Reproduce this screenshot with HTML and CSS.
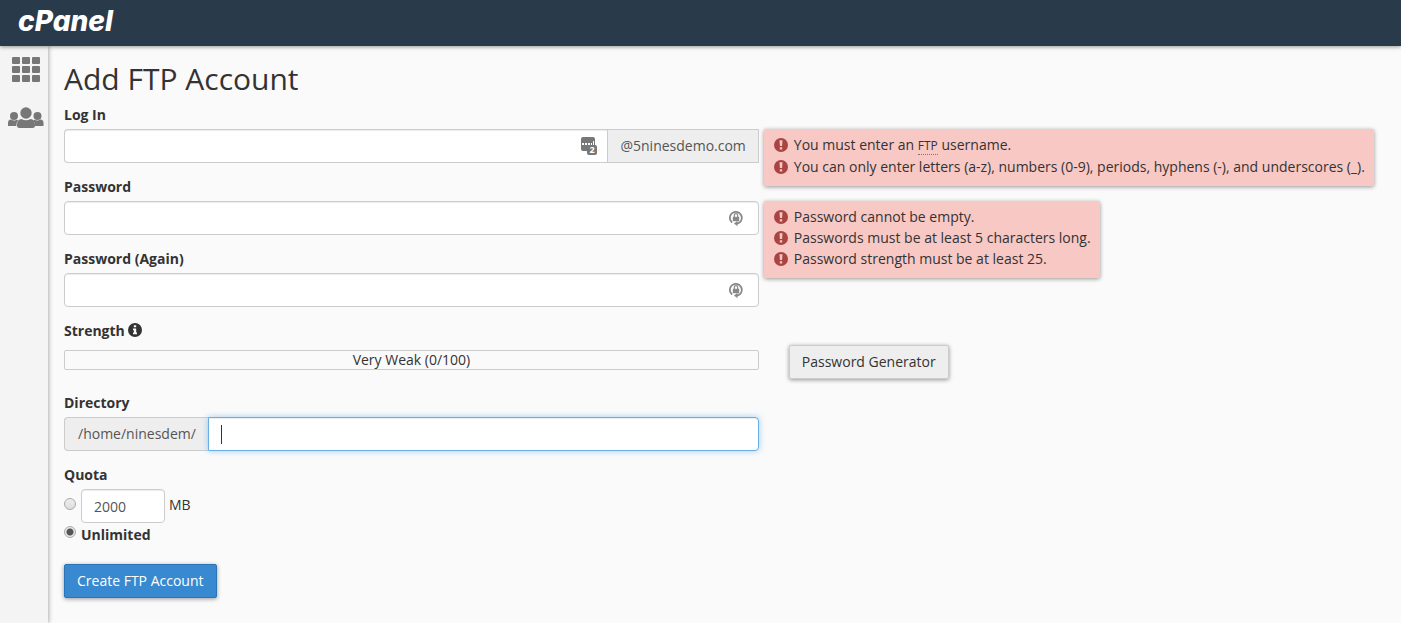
FILE: index.html
```html
<!doctype html>
<html lang="en">
    <head>
        <meta charset="utf-8">
        <meta name="viewport" content="width=device-width, initial-scale=1">
        <title>cPanel - Add FTP Account</title>
        <link rel="stylesheet" href="styles.css">
    </head>

    <body>
        <svg class="sprite" aria-hidden="true">
            <symbol id="icon-error" viewBox="0 0 14 14">
                <circle cx="7" cy="7" r="7" fill="#a94442"/>
                <path d="M5.5 2.2h3l-.4 5.9H5.900zM5.800 9.200h2.400v2.200H5.800z" fill="#f8c8c4"/>
            </symbol>
            <symbol id="icon-lock" viewBox="0 0 16 18">
                <path d="M4.200 13.600A6 6 0 1 1 12.800 12.200Q11.500 14 9 14.600" fill="none" stroke="#888" stroke-width="1.800"/>
                <path d="M9.500 11.800v5.400L6 14.600z" fill="#888"/>
                <path d="M4.800 7.800h6.400v4.400H4.800z" fill="#888"/>
                <path d="M6.300 8V6.400a1.700 1.700 0 0 1 3.400 0V8" fill="none" stroke="#888" stroke-width="1.200"/>
            </symbol>
        </svg>

        <header class="navbar">
            <a class="brand" href="#">cPanel</a>
        </header>

        <div class="layout">
            <nav class="sidebar">
                <a href="#" aria-label="Home">
                    <svg width="30" height="26" viewBox="0 0 30 26" fill="#777">
                        <rect x="1" y="0" width="8" height="7" rx="1"/>
                        <rect x="11" y="0" width="8" height="7" rx="1"/>
                        <rect x="21" y="0" width="8" height="7" rx="1"/>
                        <rect x="1" y="9" width="8" height="7" rx="1"/>
                        <rect x="11" y="9" width="8" height="7" rx="1"/>
                        <rect x="21" y="9" width="8" height="7" rx="1"/>
                        <rect x="1" y="18" width="8" height="7" rx="1"/>
                        <rect x="11" y="18" width="8" height="7" rx="1"/>
                        <rect x="21" y="18" width="8" height="7" rx="1"/>
                    </svg>
                </a>
                <a href="#" aria-label="User Manager">
                    <svg width="36" height="22" viewBox="0 0 36 22" fill="#777">
                        <circle cx="6" cy="9" r="4"/>
                        <circle cx="29.500" cy="9" r="4"/>
                        <path d="M0 19v-3q0-3.500 3-3.500 3 1.800 6 .3 1 0 1.200.4Q8.500 15 8.400 19zM35.500 19v-3q0-3.500-3-3.500-3 1.800-6 .3-1 0-1.200.4 1.700 1.800 1.800 5.800z"/>
                        <circle cx="18" cy="6" r="5.700"/>
                        <path d="M9 18.500q0-6.300 4.500-6.500 4.500 2.600 9 0 4.500.2 4.500 6.500 0 2.500-2.500 2.500h-13Q9 21 9 18.500z"/>
                    </svg>
                </a>
            </nav>

            <main class="content">
                <h1>Add FTP Account</h1>

                <form>
                    <div class="row">
                        <div class="fields">
                            <div class="form-group">
                                <label for="login">Log In</label>
                                <div class="input-group">
                                    <div class="input-wrap">
                                        <input class="form-control joined-left" id="login" type="text">
                                        <svg class="input-icon" width="16" height="18" viewBox="0 0 16 18" aria-hidden="true">
                                            <path d="M2 0h10q2 0 2 2v6H9q-2 0-2 2v4H2q-2 0-2-2V2Q0 0 2 0z" fill="#777"/>
                                            <path d="M1 6h2v2H1zM4 6h2v2H4zM7 6h2v2H7zM10 6h1v2h-1zM12 4h1v4h-1z" fill="#fff"/>
                                            <rect x="6" y="8" width="10" height="10" rx="2" fill="#777"/>
                                            <text class="badge-count" x="11" y="16" text-anchor="middle">2</text>
                                        </svg>
                                    </div>
                                    <span class="addon addon-right">@5ninesdemo.com</span>
                                </div>
                            </div>
                            <div class="form-group">
                                <label for="password">Password</label>
                                <div class="input-wrap">
                                    <input class="form-control" id="password" type="password">
                                    <svg class="input-icon lock" width="16" height="18"><use href="#icon-lock"/></svg>
                                </div>
                            </div>
                            <div class="form-group">
                                <label for="password2">Password (Again)</label>
                                <div class="input-wrap">
                                    <input class="form-control" id="password2" type="password">
                                    <svg class="input-icon lock" width="16" height="18"><use href="#icon-lock"/></svg>
                                </div>
                            </div>
                        </div>

                        <div class="errors">
                            <ul class="error-box">
                                <li><svg width="14" height="14"><use href="#icon-error"/></svg><span>You must enter an <abbr title="File Transfer Protocol">FTP</abbr> username.</span></li>
                                <li><svg width="14" height="14"><use href="#icon-error"/></svg><span>You can only enter letters (a-z), numbers (0-9), periods, hyphens (-), and underscores (_).</span></li>
                            </ul>
                            <ul class="error-box">
                                <li><svg width="14" height="14"><use href="#icon-error"/></svg><span>Password cannot be empty.</span></li>
                                <li><svg width="14" height="14"><use href="#icon-error"/></svg><span>Passwords must be at least 5 characters long.</span></li>
                                <li><svg width="14" height="14"><use href="#icon-error"/></svg><span>Password strength must be at least 25.</span></li>
                            </ul>
                        </div>
                    </div>

                    <div class="form-group">
                        <span class="label" id="strength-label">Strength
                            <svg width="14" height="14" viewBox="0 0 14 14" aria-hidden="true">
                                <circle cx="7" cy="7" r="7" fill="#333"/>
                                <path d="M5.800 2.300h2.400v2H5.800zM5 5.500h3.200v4H9v1.700H5V9.500h.9V7.200H5z" fill="#fafafa"/>
                            </svg>
                        </span>
                        <div class="row strength-row">
                            <div class="strength-bar" role="meter" aria-labelledby="strength-label" aria-valuemin="0" aria-valuemax="100" aria-valuenow="0">Very Weak (0/100)</div>
                            <button class="btn btn-default" type="button">Password Generator</button>
                        </div>
                    </div>

                    <div class="form-group fields">
                        <label for="directory">Directory</label>
                        <div class="input-group">
                            <span class="addon addon-left">/home/ninesdem/</span>
                            <div class="input-wrap has-caret">
                                <input class="form-control joined-right focused" id="directory" type="text">
                            </div>
                        </div>
                    </div>

                    <div class="form-group quota">
                        <span class="label">Quota</span>
                        <div class="quota-row">
                            <input type="radio" name="quota" id="quota-limited" aria-label="Limited">
                            <input class="form-control quota-value" type="text" value="2000" aria-label="Quota in megabytes">
                            <label class="unit" for="quota-limited">MB</label>
                        </div>
                        <div class="quota-row">
                            <input type="radio" name="quota" id="quota-unlimited" checked>
                            <label class="option" for="quota-unlimited">Unlimited</label>
                        </div>
                    </div>

                    <button class="btn btn-primary" type="submit">Create FTP Account</button>
                </form>
            </main>
        </div>
    </body>
</html>
```
FILE: styles.css
```css
* {
    box-sizing: border-box;
}

body {
    margin: 0;
    min-height: 100vh;
    display: flex;
    flex-direction: column;
    background: #fafafa;
    color: #333;
    font-family: "Open Sans", sans-serif;
    font-size: 14px;
    line-height: 20px;
}

.sprite {
    display: none;
}

.navbar {
    position: relative;
    z-index: 1;
    display: flex;
    align-items: center;
    height: 46px;
    padding: 0 18px 5px;
    background: #293a4a;
    box-shadow: 0 1px 4px rgba(0, 0, 0, 0.4);
}

.brand {
    color: #fff;
    font-family: Inter, sans-serif;
    font-size: 28px;
    font-style: italic;
    font-weight: 800;
    line-height: 40px;
    text-decoration: none;
}

.layout {
    display: flex;
    flex: 1;
}

.sidebar {
    flex: none;
    display: flex;
    flex-direction: column;
    align-items: center;
    gap: 24px;
    width: 48px;
    padding: 11px 0 0 4px;
    background: #f4f4f4;
    box-shadow: 1px 0 4px rgba(0, 0, 0, 0.3);
}

.sidebar svg {
    display: block;
}

.content {
    flex: 1;
    min-width: 0;
    padding: 15px 26px 15px 16px;
}

h1 {
    margin: 0 0 8px;
    font-size: 30px;
    font-weight: 400;
    line-height: 36px;
}

.row {
    display: flex;
    gap: 5px;
}

.fields,
.strength-bar {
    flex: none;
    width: 53%;
}

.form-group {
    margin-bottom: 14px;
}

label,
.label {
    display: block;
    font-weight: 700;
}

.form-group > label,
.form-group > .label {
    margin-bottom: 4px;
}

.label svg {
    vertical-align: -1px;
}

.input-group {
    display: flex;
}

.input-wrap {
    position: relative;
    flex: 1;
    min-width: 0;
}

.form-control {
    display: block;
    width: 100%;
    height: 34px;
    padding: 6px 12px;
    border: 1px solid #ccc;
    border-radius: 4px;
    background: #fff;
    color: #555;
    font: inherit;
    box-shadow: inset 0 1px 1px rgba(0, 0, 0, 0.075);
}

.joined-left {
    border-right: 0;
    border-radius: 4px 0 0 4px;
}

.joined-right {
    border-radius: 0 4px 4px 0;
}

.focused {
    border-color: #66afe9;
    outline: 0;
    box-shadow: inset 0 1px 1px rgba(0, 0, 0, 0.075), 0 0 6px rgba(102, 175, 233, 0.6);
}

/* insertion point of the active field */
.has-caret::after {
    content: "";
    position: absolute;
    top: 8px;
    left: 13px;
    width: 1px;
    height: 19px;
    background: #333;
}

.input-icon {
    position: absolute;
    top: 8px;
    right: 10px;
}

.input-icon.lock {
    right: 15px;
}

.badge-count {
    fill: #fff;
    font-size: 9px;
    font-weight: 700;
}

.addon {
    padding: 6px 12px;
    border: 1px solid #ccc;
    background: #eee;
    color: #555;
}

.addon-left {
    padding-left: 13px;
    border-right: 0;
    border-radius: 4px 0 0 4px;
}

.errors {
    display: flex;
    flex-direction: column;
    align-items: flex-start;
    gap: 15px;
    padding-top: 24px;
}

.error-box {
    margin: 0;
    padding: 5px 9px 9px 10px;
    border-radius: 2px;
    background: #f8c8c4;
    list-style: none;
    line-height: 21px;
    box-shadow: 0 1px 4px rgba(0, 0, 0, 0.4);
}

.error-box li {
    display: flex;
    gap: 6px;
}

.error-box svg {
    flex: none;
    margin-top: 4px;
}

abbr {
    border-bottom: 1px dotted #777;
    font-size: 12px;
    text-decoration: none;
}

.strength-row {
    align-items: flex-start;
    gap: 30px;
}

.strength-bar {
    height: 20px;
    margin-top: 5px;
    border: 1px solid #ccc;
    border-radius: 2px;
    line-height: 18px;
    text-align: center;
}

.quota-row {
    display: flex;
    align-items: center;
    gap: 4px;
}

.quota {
    margin-bottom: 19px;
}

.quota-value {
    width: 84px;
}

.unit {
    padding-bottom: 2px;
    font-weight: 400;
}

.option {
    padding-top: 2px;
}

input[type="radio"] {
    appearance: none;
    width: 12px;
    height: 12px;
    margin: 0 1px 4px 0;
    border: 1px solid #aaa;
    border-radius: 50%;
    background: linear-gradient(#eee, #ddd);
}

input[type="radio"]:checked {
    background: radial-gradient(circle, #555 0 3px, #e8e8e8 4px);
}

.btn {
    height: 34px;
    padding: 6px 12px;
    border: 1px solid #ccc;
    border-radius: 2px;
    font: inherit;
    cursor: pointer;
    box-shadow: 0 1px 4px rgba(0, 0, 0, 0.4);
}

.btn-default {
    background: #eee;
    color: #333;
}

.btn-primary {
    border-color: #2a75b8;
    background: #3889d0;
    color: #fff;
}
```
